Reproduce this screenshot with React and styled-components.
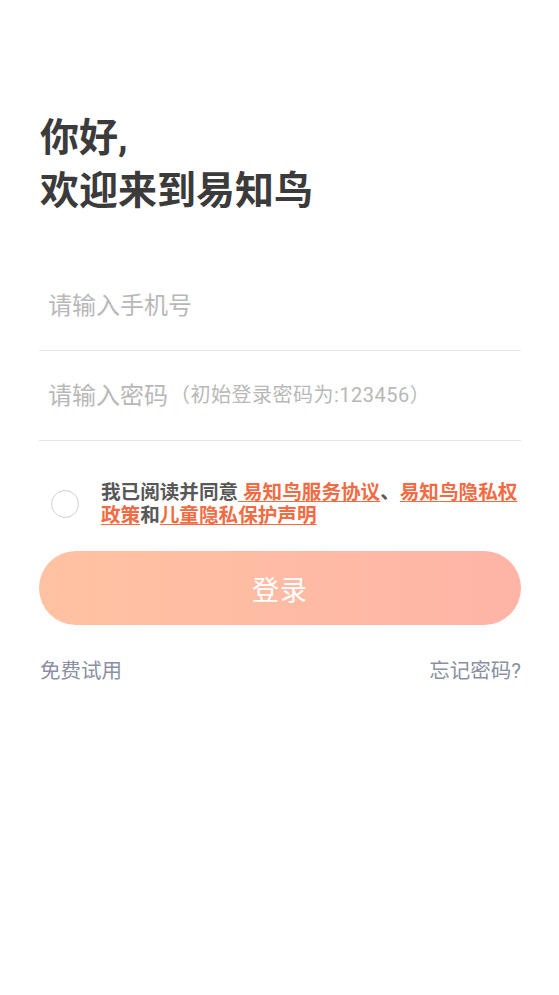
import React from 'react';
import styled, { createGlobalStyle } from 'styled-components';

const GlobalStyle = createGlobalStyle`
  body {
    margin: 0;
    background: #fff;
    font-family: Roboto, "Noto Sans CJK SC", sans-serif;
  }
`;

const Page = styled.div`
  padding: 112px 38px 0 39px;
  display: flex;
  flex-direction: column;
`;

const Title = styled.h1`
  margin: 0 0 43px 1px;
  font-size: 39px;
  line-height: 53px;
  font-weight: 700;
  color: #3b3b3b;
`;

const Field = styled.div`
  height: 90px;
  display: flex;
  align-items: center;
  padding-left: 9px;
  padding-bottom: 4px;
  border-bottom: 1px solid #e6e6e6;
  color: #b8b8b8;
  font-size: 24px;
  box-sizing: border-box;
`;

const Hint = styled.span`
  font-size: 20px;
  letter-spacing: 0.5px;
  margin-left: 2px;
`;

const Agreement = styled.div`
  display: flex;
  align-items: center;
  margin-top: 40px;
`;

const Radio = styled.span`
  flex: none;
  width: 26px;
  height: 26px;
  border: 1px solid #cfcfcf;
  border-radius: 50%;
  margin: 0 22px 0 12px;
`;

const AgreeText = styled.p`
  margin: 0;
  font-size: 19.6px;
  line-height: 23px;
  font-weight: 700;
  color: #585858;
`;

const Link = styled.span`
  color: #f26b43;
  text-decoration: underline;
  text-underline-offset: 2px;
`;

const LoginButton = styled.button`
  margin-top: 24px;
  height: 74px;
  border: none;
  border-radius: 37px;
  background: linear-gradient(90deg, #ffc2a2 0%, #ffb4a6 100%);
  color: #fff;
  font-family: inherit;
  font-size: 27px;
  letter-spacing: 1px;
`;

const Footer = styled.div`
  display: flex;
  justify-content: space-between;
  margin-top: 32px;
  font-size: 20.5px;
  line-height: 28px;
  color: #8a90a3;
`;

const FooterLink = styled.span`
  margin-left: ${(p) => (p.$left ? '1px' : '0')};
`;

export default function App() {
  return (
    <>
      <GlobalStyle />
      <Page>
        <Title>
          你好,
          <br />
          欢迎来到易知鸟
        </Title>
        <Field>请输入手机号</Field>
        <Field>
          请输入密码<Hint>（初始登录密码为:123456）</Hint>
        </Field>
        <Agreement>
          <Radio />
          <AgreeText>
            我已阅读并同意<Link> 易知鸟服务协议</Link>、<Link>易知鸟隐私权政策</Link>和
            <Link>儿童隐私保护声明</Link>
          </AgreeText>
        </Agreement>
        <LoginButton>登录</LoginButton>
        <Footer>
          <FooterLink $left>免费试用</FooterLink>
          <FooterLink>忘记密码?</FooterLink>
        </Footer>
      </Page>
    </>
  );
}
